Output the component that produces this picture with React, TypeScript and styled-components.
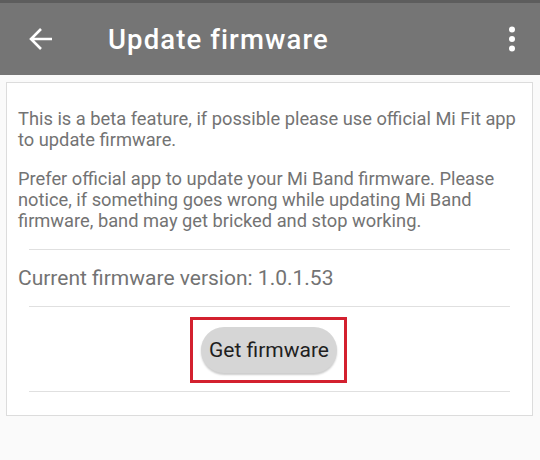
import React from "react";
import styled, { createGlobalStyle } from "styled-components";

const COLORS = {
  statusBar: "#5d5d5d",
  toolbar: "#757575",
  page: "#fafafa",
  card: "#ffffff",
  cardBorder: "#dcdcdc",
  divider: "#e0e0e0",
  text: "#737373",
  buttonBg: "#d6d6d6",
  buttonText: "#1f1f1f",
  highlight: "#d3202f",
};

const GlobalStyle = createGlobalStyle`
  html, body {
    margin: 0;
    padding: 0;
    background: ${COLORS.page};
    font-family: Roboto, "Noto Sans", Arial, sans-serif;
  }
`;

const Screen = styled.div`
  width: 540px;
  height: 460px;
  overflow: hidden;
  background: ${COLORS.page};
`;

const StatusEdge = styled.div`
  height: 3px;
  background: ${COLORS.statusBar};
`;

const Toolbar = styled.header`
  height: 72px;
  background: ${COLORS.toolbar};
  display: flex;
  align-items: center;
  padding: 0 24px 0 29px;
  color: #fff;
`;

const IconButton = styled.button`
  display: flex;
  align-items: center;
  justify-content: center;
  padding: 0;
  border: none;
  background: none;
  color: inherit;
`;

const Title = styled.h1`
  margin: 0 0 0 55px;
  flex: 1;
  font-size: 27.5px;
  font-weight: 500;
  letter-spacing: 1.1px;
`;

const Card = styled.section`
  margin: 7px 7px 0 6px;
  background: ${COLORS.card};
  border: 1px solid ${COLORS.cardBorder};
  padding: 25px 0 23px;
`;

const Paragraph = styled.p`
  margin: 0 12px 18px 11px;
  font-size: 18.3px;
  line-height: 21px;
  color: ${COLORS.text};
`;

const Divider = styled.hr`
  margin: 0 22px 0 22px;
  border: none;
  border-top: 1px solid ${COLORS.divider};
`;

const Version = styled.div`
  margin: 0 11px;
  height: 56px;
  display: flex;
  align-items: center;
  font-size: 21px;
  color: ${COLORS.text};
`;

const ButtonRow = styled.div`
  display: flex;
  justify-content: center;
  padding: 10px 0 8px;
`;

const Highlight = styled.div`
  border: 3px solid ${COLORS.highlight};
  padding: 7px 7px 7px 8px;
  margin-left: -2px;
`;

const PillButton = styled.button`
  height: 46px;
  padding: 0 8px;
  border: none;
  border-radius: 23px;
  background: ${COLORS.buttonBg};
  color: ${COLORS.buttonText};
  font-family: inherit;
  font-size: 21px;
  box-shadow: 0 2px 2px rgba(0, 0, 0, 0.2);
`;

function BackArrow() {
  return (
    <svg width="24" height="24" viewBox="0 0 24 24">
      <path
        d="M23 12H2M12 2L2 12l10 10"
        fill="none"
        stroke="#fff"
        strokeWidth="2.6"
      />
    </svg>
  );
}

function MoreIcon() {
  return (
    <svg width="8" height="28" viewBox="0 0 8 28">
      <circle cx="4" cy="4.5" r="3" fill="#fff" />
      <circle cx="4" cy="14" r="3" fill="#fff" />
      <circle cx="4" cy="23.5" r="3" fill="#fff" />
    </svg>
  );
}

export default function App() {
  return (
    <Screen>
      <GlobalStyle />
      <StatusEdge />
      <Toolbar>
        <IconButton aria-label="Back">
          <BackArrow />
        </IconButton>
        <Title>Update firmware</Title>
        <IconButton aria-label="More options">
          <MoreIcon />
        </IconButton>
      </Toolbar>
      <Card>
        <Paragraph>
          This is a beta feature, if possible please use official Mi Fit app
          to update firmware.
        </Paragraph>
        <Paragraph>
          Prefer official app to update your Mi Band firmware. Please notice,
          if something goes wrong while updating Mi Band firmware, band may
          get bricked and stop working.
        </Paragraph>
        <Divider />
        <Version>Current firmware version: 1.0.1.53</Version>
        <Divider />
        <ButtonRow>
          <Highlight>
            <PillButton>Get firmware</PillButton>
          </Highlight>
        </ButtonRow>
        <Divider />
      </Card>
    </Screen>
  );
}
